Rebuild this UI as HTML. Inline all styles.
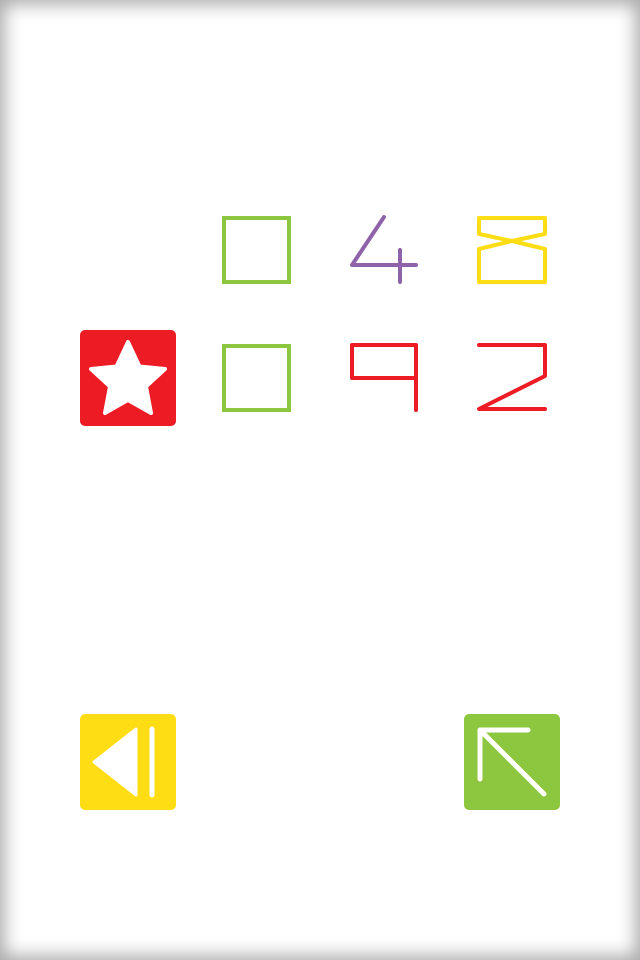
<!DOCTYPE html>
<html><head><style>
html,body{margin:0;padding:0;background:#fff}
.page{position:relative;width:640px;height:960px;overflow:hidden;background:#fff;box-shadow:inset 0 0 18px 4px rgba(0,0,0,0.35)}
svg{position:absolute;left:0;top:0}
</style></head><body><div class="page">
<svg width="640" height="960" viewBox="0 0 640 960">
<g fill="none" stroke-linecap="round" stroke-linejoin="round" stroke-width="4">
<rect x="224" y="218" width="65" height="64" stroke="#8DC63F" stroke-linejoin="miter"/>
<path d="M384 217 L352 265 L416 265 M400 250 L400 282" stroke="#8E63AA"/>
<path d="M479 218 L545 218 L545 234 L512 241 L479 234 Z M512 241 L545 249 L545 282 L479 282 L479 249 Z" stroke="#FFDD15"/>
<rect x="224" y="346" width="65" height="64" stroke="#8DC63F" stroke-linejoin="miter"/>
<path d="M416 410 L416 345 L352 345 L352 378 L416 378" stroke="#ED1C24"/>
<path d="M479 345 L545 345 L545 376 L479 409 L545 409" stroke="#ED1C24"/>
</g>
<rect x="80" y="330" width="96" height="96" rx="5" fill="#ED1C24"/>
<polygon points="128,342 139.5,366.5 165,369 146,386.5 151,413 128,400 105,413 110,386.5 91,369 116.5,366.5" fill="#fff" stroke="#fff" stroke-width="4" stroke-linejoin="round"/>
<rect x="80" y="714" width="96" height="96" rx="5" fill="#FFDD15"/>
<polygon points="94,762 136,729 136,795" fill="#fff" stroke="#fff" stroke-width="3" stroke-linejoin="round"/>
<line x1="152" y1="729" x2="152" y2="795" stroke="#fff" stroke-width="5" stroke-linecap="round"/>
<rect x="464" y="714" width="96" height="96" rx="5" fill="#8DC63F"/>
<path d="M480 779 L480 730 L528 730 M482 732 L544 794" fill="none" stroke="#fff" stroke-width="5" stroke-linecap="round" stroke-linejoin="round"/>
</svg>
</div></body></html>
